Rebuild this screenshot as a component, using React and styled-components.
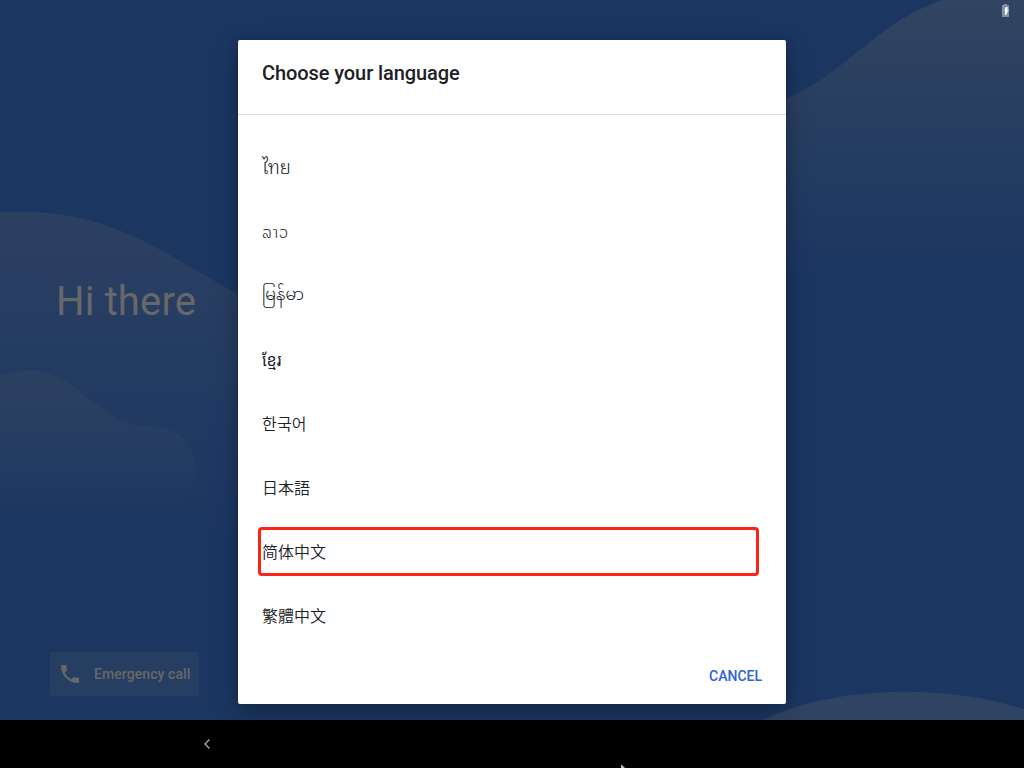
import React from "react";
import styled, { createGlobalStyle } from "styled-components";

const GlobalStyle = createGlobalStyle`
  * { box-sizing: border-box; }
  body { margin: 0; background: #000; }
`;

const Screen = styled.div`
  position: relative;
  display: flex;
  flex-direction: column;
  width: 1024px;
  height: 768px;
  overflow: hidden;
  font-family: Roboto, "Noto Sans", "Noto Sans CJK SC", sans-serif;
`;

const Scene = styled.main`
  position: relative;
  display: flex;
  flex-direction: column;
  flex: 1;
  overflow: hidden;
  background: #1b3661;
`;

const Waves = styled.svg`
  position: absolute;
  inset: 0;
  width: 1024px;
  height: 720px;
`;

const StatusBar = styled.header`
  position: relative;
  display: flex;
  justify-content: flex-end;
  height: 24px;
  padding: 4px 15px 0 0;
`;

const Welcome = styled.section`
  position: relative;
  display: flex;
  flex: 1;
  flex-direction: column;
  justify-content: space-between;
  align-items: flex-start;
  padding: 254px 50px 24px;
`;

const Greeting = styled.h1`
  margin: 0 0 0 6px;
  font-size: 40px;
  line-height: 48px;
  font-weight: 400;
  letter-spacing: 0.15px;
  color: #686868;
`;

const EmergencyButton = styled.button`
  display: flex;
  align-items: center;
  gap: 12px;
  width: 149px;
  height: 44px;
  padding: 0 0 0 8px;
  border: 0;
  border-radius: 2px;
  background: #263e62;
  color: #686868;
  font: 500 14px/20px Roboto, sans-serif;
  letter-spacing: 0.08px;
  white-space: nowrap;
`;

const NavBar = styled.nav`
  display: flex;
  align-items: center;
  height: 48px;
  padding-left: 203px;
  background: #000;
`;

const Overlay = styled.div`
  position: absolute;
  inset: 0 0 48px;
  display: flex;
  justify-content: center;
  padding-top: 40px;
  overflow: hidden;
`;

const Dialog = styled.div`
  display: flex;
  flex-direction: column;
  width: 548px;
  height: 664px;
  background: #fff;
  border-radius: 2px;
  box-shadow: 0 8px 24px rgba(0, 0, 0, 0.27), 0 0 8px rgba(0, 0, 0, 0.12);
`;

const DialogTitle = styled.h2`
  height: 75px;
  margin: 0;
  padding: 19px 24px 0;
  border-bottom: 1px solid #dedede;
  font-size: 20px;
  line-height: 28px;
  font-weight: 500;
  letter-spacing: -0.08px;
  color: #202124;
`;

const LanguageList = styled.ul`
  flex: 1;
  margin: 0;
  padding: 22px 24px 0;
  list-style: none;
`;

const Language = styled.li`
  display: flex;
  align-items: center;
  height: 64px;
  padding-bottom: ${(p) => p.$lift || 0}px;
  font-family: Roboto, ${(p) => p.$font}, sans-serif;
  font-size: ${(p) => p.$size || 16}px;
  letter-spacing: ${(p) => p.$spacing || 0}px;
  font-weight: ${(p) => p.$weight || 350};
  line-height: 24px;
  color: #202124;
`;

const Highlighted = styled(Language)`
  height: 49px;
  margin: 6px 3px 9px -4px;
  padding: 3px 0 0 1px;
  border: 3px solid #fa2418;
  border-radius: 4px;
`;

const Actions = styled.footer`
  display: flex;
  justify-content: flex-end;
  align-items: center;
  height: 56px;
  padding-right: 24px;
`;

const CancelButton = styled.button`
  padding: 0;
  border: 0;
  background: none;
  color: #2f62d4;
  font: 500 14px/20px Roboto, sans-serif;
`;

const Cursor = styled.svg`
  position: absolute;
  left: 621px;
  top: 765px;
`;

const languages = [
  { name: "ไทย", lang: "th", font: '"Noto Sans Thai Looped", "Noto Looped Thai", "Loma", "Waree"', size: 18.5, lift: 2 },
  { name: "ລາວ", lang: "lo", font: '"Noto Sans Lao"', spacing: 0.9 },
  { name: "မြန်မာ", lang: "my", font: '"Noto Sans Myanmar"', size: 16.4, lift: 4 },
  { name: "ខ្មែរ", lang: "km", font: '"Noto Sans Khmer"', weight: 400 },
  { name: "한국어", lang: "ko", font: '"Noto Sans CJK KR"', spacing: 0.2 },
  { name: "日本語", lang: "ja", font: '"Noto Sans CJK JP"' },
  { name: "简体中文", lang: "zh-Hans", font: '"Noto Sans CJK SC"', highlighted: true },
  { name: "繁體中文", lang: "zh-Hant", font: '"Noto Sans CJK TC"' },
];

function Background() {
  return (
    <Waves viewBox="0 0 1024 720" aria-hidden="true">
      <defs>
        <linearGradient id="right" gradientUnits="userSpaceOnUse" x1="0" y1="0" x2="0" y2="275">
          <stop offset="0" stopColor="#314461" />
          <stop offset="1" stopColor="#314461" stopOpacity="0" />
        </linearGradient>
        <linearGradient id="left" gradientUnits="userSpaceOnUse" x1="0" y1="212" x2="0" y2="540">
          <stop offset="0" stopColor="#2c4062" />
          <stop offset="1" stopColor="#2c4062" stopOpacity="0" />
        </linearGradient>
        <linearGradient id="cloud" gradientUnits="userSpaceOnUse" x1="0" y1="370" x2="0" y2="515">
          <stop offset="0" stopColor="#304361" stopOpacity="0.7" />
          <stop offset="1" stopColor="#304361" stopOpacity="0" />
        </linearGradient>
      </defs>
      <path fill="url(#right)" d="M760 106C838 90 868 24 943 0H1024V275H760Z" />
      <path fill="url(#left)" d="M0 212C105 208 144 241 239 295L300 330V540H0Z" />
      <path fill="url(#cloud)" d="M0 376C76 350 86 427 155 427C181 428 196 447 196 471C196 496 176 511 139 515L0 520Z" />
      <path fill="#2f4362" d="M762 720C835 685 946 684 1024 709V720Z" />
    </Waves>
  );
}

function BatteryIcon() {
  return (
    <svg width="12" height="14" viewBox="0 0 12 14" aria-label="Battery charging">
      <path fill="#8290a6" d="M7 0h3v1h2v12H5V1h2z" />
      <path fill="#fff" d="M8.5 3h2v3h1v1h-1v2h-1v2H8V7H7.5z" />
    </svg>
  );
}

function PhoneIcon() {
  return (
    <svg width="24" height="24" viewBox="0 0 24 24" fill="currentColor" aria-hidden="true">
      <path d="M6.62 10.79c1.44 2.83 3.76 5.14 6.59 6.59l2.2-2.2c.27-.27.67-.36 1.02-.24 1.12.37 2.33.57 3.57.57.55 0 1 .45 1 1V20c0 .55-.45 1-1 1C10.61 21 3 13.39 3 4c0-.55.45-1 1-1h3.5c.55 0 1 .45 1 1 0 1.25.2 2.45.57 3.57.11.35.03.74-.25 1.02z" />
    </svg>
  );
}

export default function App() {
  return (
    <>
      <GlobalStyle />
      <Screen>
        <Scene>
          <Background />
          <StatusBar><BatteryIcon /></StatusBar>
          <Welcome>
            <Greeting>Hi there</Greeting>
            <EmergencyButton><PhoneIcon />Emergency call</EmergencyButton>
          </Welcome>
        </Scene>
        <NavBar>
          <svg width="8" height="10" viewBox="0 0 8 10" fill="none" stroke="#a6a6a6" strokeWidth="1.4" aria-label="Back">
            <path d="M6.4 .6L2 5l4.4 4.4" />
          </svg>
        </NavBar>
        <Overlay>
          <Dialog role="dialog" aria-labelledby="language-title">
            <DialogTitle id="language-title">Choose your language</DialogTitle>
            <LanguageList>
              {languages.map(({ name, lang, font, size, spacing, weight, lift, highlighted }) => {
                const Row = highlighted ? Highlighted : Language;
                return (
                  <Row key={lang} lang={lang} $font={font} $size={size} $spacing={spacing} $weight={weight} $lift={lift}>
                    <span>{name}</span>
                  </Row>
                );
              })}
            </LanguageList>
            <Actions><CancelButton>CANCEL</CancelButton></Actions>
          </Dialog>
        </Overlay>
        <Cursor width="6" height="3" viewBox="0 0 6 3" aria-hidden="true">
          <path d="M0 0h1l3 3H0z" fill="#bbb" />
        </Cursor>
      </Screen>
    </>
  );
}
